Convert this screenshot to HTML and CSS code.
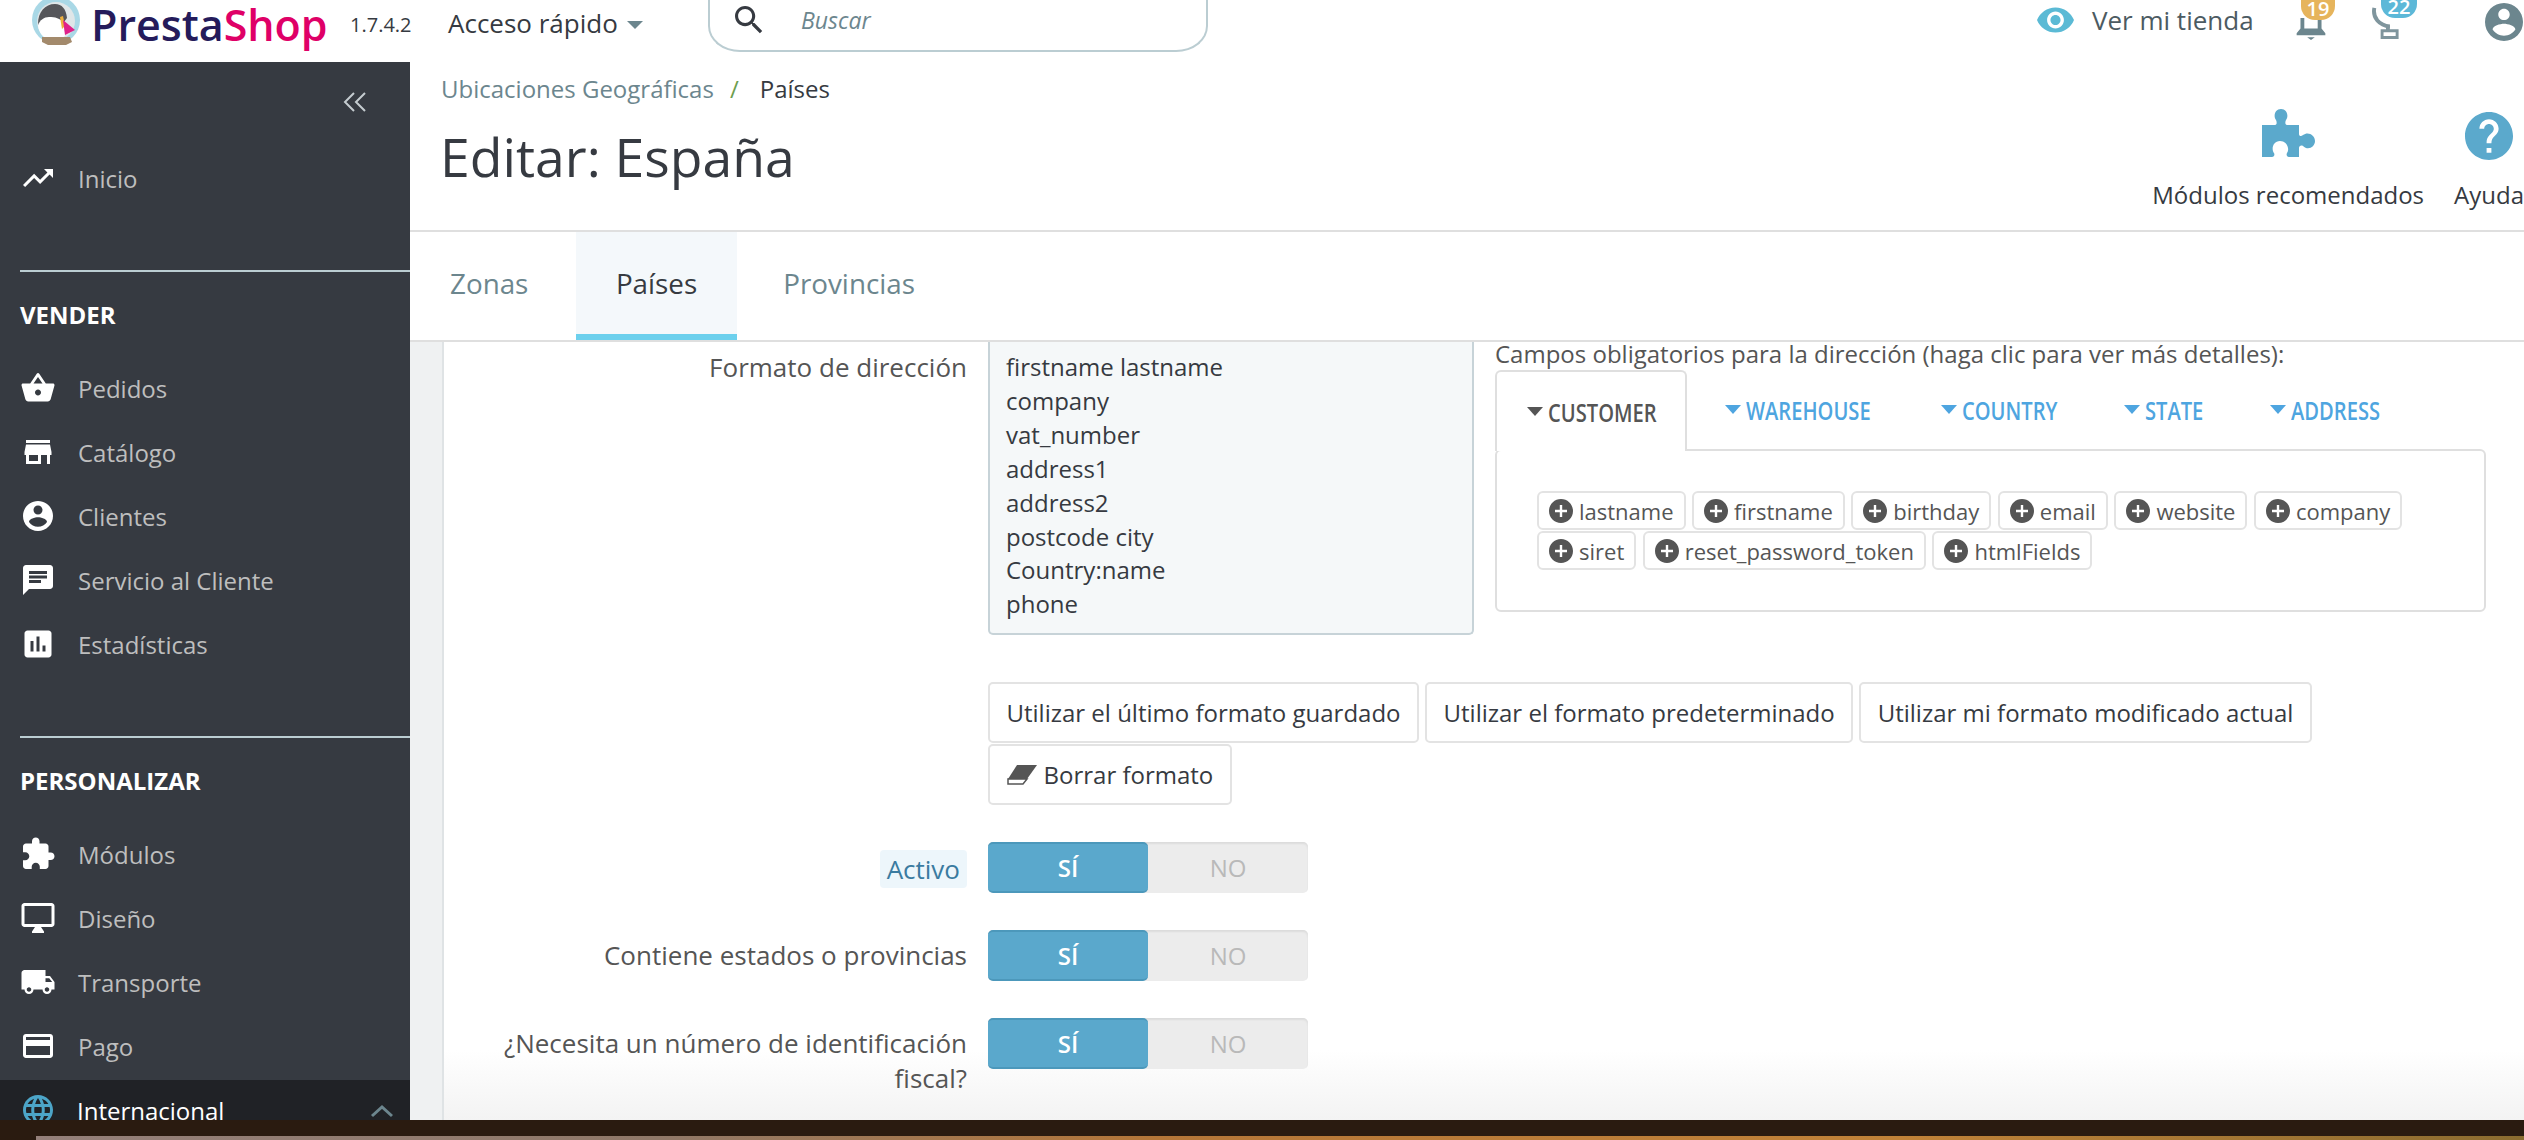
FILE: index.html
```html
<!DOCTYPE html>
<html lang="es">
<head>
<meta charset="utf-8">
<title>Editar: España</title>
<link rel="stylesheet" href="styles.css">
</head>
<body>
<svg class="defs" aria-hidden="true">
  <symbol id="i-add" viewBox="2 2 20 20"><path d="M12 2C6.48 2 2 6.48 2 12s4.48 10 10 10 10-4.48 10-10S17.52 2 12 2zm5 11h-4v4h-2v-4H7v-2h4V7h2v4h4v2z"/></symbol>
  <symbol id="i-account" viewBox="2 2 20 20"><path d="M12 2C6.48 2 2 6.48 2 12s4.48 10 10 10 10-4.48 10-10S17.52 2 12 2zm0 3c1.66 0 3 1.34 3 3s-1.34 3-3 3-3-1.34-3-3 1.34-3 3-3zm0 14.2c-2.5 0-4.71-1.28-6-3.22.03-1.99 4-3.08 6-3.08 1.99 0 5.97 1.09 6 3.08-1.29 1.94-3.5 3.22-6 3.22z"/></symbol>
</svg>
<div class="app">
  <header class="topbar">
    <div class="logo">
      <svg class="logo-mark" viewBox="0 0 48 46">
        <circle cx="24" cy="20" r="24" fill="#a9d8e6"/>
        <circle cx="24" cy="21" r="19" fill="#dfe6e8"/>
        <path d="M6 24C6 12 13 4 23 4c7 0 11 5 12 14l-3 4-18-4-8 8z" fill="#55565a"/>
        <path d="M6 25c2-5 6-8 11-8 6 0 11 1 15 6l1 13-3 2H13C9 35 6 30 6 25z" fill="#fff"/>
        <path d="M28 17l3-1 2 10-3 3z" fill="#eeb03c"/>
        <path d="M31 20L43 30 33 35z" fill="#e0218a"/>
        <path d="M10 37h28l2 5-6 3H16l-6-3z" fill="#a38a6c"/>
      </svg>
      <span class="logo-text"><span class="logo-presta">Presta</span><span class="logo-shop">Shop</span></span>
      <span class="version">1.7.4.2</span>
    </div>
    <div class="quick">Acceso rápido<span class="quick-caret"></span></div>
    <div class="search">
      <svg class="search-icon" viewBox="3 3 18 18"><path d="M15.5 14h-.79l-.28-.27C15.41 12.59 16 11.11 16 9.5 16 5.91 13.09 3 9.5 3S3 5.91 3 9.5 5.91 16 9.5 16c1.61 0 3.09-.59 4.23-1.57l.27.28v.79l5 4.99L20.49 19l-4.99-5zm-6 0C7.01 14 5 11.99 5 9.5S7.01 5 9.5 5 14 7.01 14 9.5 11.99 14 9.5 14z"/></svg>
      <span class="search-text">Buscar</span>
    </div>
    <div class="top-right">
      <svg class="eye" viewBox="1 4.5 22 15"><path d="M12 4.5C7 4.5 2.73 7.61 1 12c1.73 4.39 6 7.5 11 7.5s9.27-3.11 11-7.5c-1.73-4.39-6-7.5-11-7.5zM12 17c-2.76 0-5-2.24-5-5s2.24-5 5-5 5 2.24 5 5-2.24 5-5 5zm0-8c-1.66 0-3 1.34-3 3s1.34 3 3 3 3-1.34 3-3-1.34-3-3-3z"/></svg>
      <span class="view-shop">Ver mi tienda</span>
      <div class="notif notif-bell">
        <svg class="notif-icon" viewBox="0 0 30 23"><path d="M4 0h4v11h14V0h4v11l4 5v2H0v-2l4-5z"/><path d="M11 20h8l-4 3z"/></svg>
        <span class="badge badge-orange">19</span>
      </div>
      <div class="notif notif-dish">
        <svg class="notif-icon" viewBox="0 0 28 34"><path d="M3 1C1 11 8 19 19 20" fill="none" stroke="#7f959d" stroke-width="4"/><path d="M15 19h4v5h-4z" fill="#7f959d"/><path d="M11 24.5h15.500v7H11z" fill="none" stroke="#7f959d" stroke-width="3"/></svg>
        <span class="badge badge-blue">22</span>
      </div>
      <svg class="user-icon"><use href="#i-account"/></svg>
    </div>
  </header>

  <div class="body">
    <nav class="sidebar">
      <div class="collapse"><svg class="collapse-icon" viewBox="0 0 24 20"><path d="M11 1L2 10l9 9M22 1l-9 9 9 9" fill="none" stroke="#c5ccd0" stroke-width="2"/></svg></div>
      <a class="nav-item"><svg class="nav-icon" viewBox="0 0 24 24"><path d="M16 6l2.29 2.29-4.88 4.88-4-4L2 16.59 3.41 18l6-6 4 4 6.3-6.29L22 12V6z"/></svg><span>Inicio</span></a>
      <div class="nav-sep"></div>
      <h2 class="nav-head">VENDER</h2>
      <a class="nav-item"><svg class="nav-icon" viewBox="0 0 24 24"><path d="M17.21 9l-4.38-6.56c-.19-.28-.51-.42-.83-.42-.32 0-.64.14-.83.43L6.79 9H2c-.55 0-1 .45-1 1 0 .09.01.18.04.27l2.54 9.27c.23.84 1 1.46 1.92 1.46h13c.92 0 1.69-.62 1.93-1.46l2.54-9.27L23 10c0-.55-.45-1-1-1h-4.79zM9 9l3-4.4L15 9H9zm3 8c-1.1 0-2-.9-2-2s.9-2 2-2 2 .9 2 2-.9 2-2 2z"/></svg><span>Pedidos</span></a>
      <a class="nav-item"><svg class="nav-icon" viewBox="0 0 24 24"><path d="M20 4H4v2h16V4zm1 10v-2l-1-5H4l-1 5v2h1v6h10v-6h4v6h2v-6h1zm-9 4H6v-4h6v4z"/></svg><span>Catálogo</span></a>
      <a class="nav-item"><svg class="nav-icon" viewBox="0 0 24 24"><path d="M12 2C6.48 2 2 6.48 2 12s4.48 10 10 10 10-4.48 10-10S17.52 2 12 2zm0 3c1.66 0 3 1.34 3 3s-1.34 3-3 3-3-1.34-3-3 1.34-3 3-3zm0 14.2c-2.5 0-4.71-1.28-6-3.22.03-1.99 4-3.08 6-3.08 1.99 0 5.97 1.09 6 3.08-1.29 1.94-3.5 3.22-6 3.22z"/></svg><span>Clientes</span></a>
      <a class="nav-item"><svg class="nav-icon" viewBox="0 0 24 24"><path d="M20 2H4c-1.1 0-1.99.9-1.99 2L2 22l4-4h14c1.1 0 2-.9 2-2V4c0-1.1-.9-2-2-2zM6 9h12v2H6V9zm8 5H6v-2h8v2zm4-6H6V6h12v2z"/></svg><span>Servicio al Cliente</span></a>
      <a class="nav-item"><svg class="nav-icon" viewBox="0 0 24 24"><path d="M19 3H5c-1.1 0-2 .9-2 2v14c0 1.1.9 2 2 2h14c1.1 0 2-.9 2-2V5c0-1.1-.9-2-2-2zM9 17H7v-7h2v7zm4 0h-2V7h2v10zm4 0h-2v-4h2v4z"/></svg><span>Estadísticas</span></a>
      <div class="nav-sep"></div>
      <h2 class="nav-head">PERSONALIZAR</h2>
      <a class="nav-item"><svg class="nav-icon" viewBox="0 0 24 24"><path d="M20.5 11H19V7c0-1.1-.9-2-2-2h-4V3.5C13 2.12 11.88 1 10.5 1S8 2.12 8 3.5V5H4c-1.1 0-1.99.9-1.99 2v3.8H3.5c1.49 0 2.7 1.21 2.7 2.7s-1.21 2.7-2.7 2.7H2V20c0 1.1.9 2 2 2h3.8v-1.5c0-1.49 1.21-2.7 2.7-2.7 1.49 0 2.7 1.21 2.7 2.7V22H17c1.1 0 2-.9 2-2v-4h1.5c1.38 0 2.5-1.12 2.5-2.5S21.88 11 20.5 11z"/></svg><span>Módulos</span></a>
      <a class="nav-item"><svg class="nav-icon" viewBox="0 0 24 24"><path d="M21 2H3c-1.1 0-2 .9-2 2v12c0 1.1.9 2 2 2h7l-2 3v1h8v-1l-2-3h7c1.1 0 2-.9 2-2V4c0-1.1-.9-2-2-2zm0 14H3V4h18v12z"/></svg><span>Diseño</span></a>
      <a class="nav-item"><svg class="nav-icon" viewBox="0 0 24 24"><path d="M20 8h-3V4H3c-1.1 0-2 .9-2 2v11h2c0 1.66 1.34 3 3 3s3-1.34 3-3h6c0 1.66 1.34 3 3 3s3-1.34 3-3h2v-5l-3-4zM6 18.5c-.83 0-1.5-.67-1.5-1.5s.67-1.5 1.5-1.5 1.5.67 1.5 1.5-.67 1.5-1.5 1.5zm13.5-9l1.96 2.5H17V9.5h2.5zm-1.5 9c-.83 0-1.5-.67-1.5-1.5s.67-1.5 1.5-1.5 1.5.67 1.5 1.5-.67 1.5-1.5 1.5z"/></svg><span>Transporte</span></a>
      <a class="nav-item"><svg class="nav-icon" viewBox="0 0 24 24"><path d="M20 4H4c-1.11 0-1.99.89-1.99 2L2 18c0 1.11.89 2 2 2h16c1.11 0 2-.89 2-2V6c0-1.11-.89-2-2-2zm0 14H4v-6h16v6zm0-10H4V6h16v2z"/></svg><span>Pago</span></a>
      <a class="nav-item nav-active"><svg class="nav-icon" viewBox="0 0 24 24"><path d="M11.99 2C6.47 2 2 6.48 2 12s4.47 10 9.99 10C17.52 22 22 17.52 22 12S17.52 2 11.99 2zm6.93 6h-2.95c-.32-1.25-.78-2.45-1.38-3.56 1.84.63 3.37 1.91 4.33 3.56zM12 4.04c.83 1.2 1.48 2.53 1.91 3.96h-3.82c.43-1.43 1.08-2.76 1.91-3.96zM4.26 14C4.1 13.36 4 12.69 4 12s.1-1.36.26-2h3.38c-.08.66-.14 1.32-.14 2 0 .68.06 1.34.14 2H4.26zm.82 2h2.95c.32 1.25.78 2.45 1.38 3.56-1.84-.63-3.37-1.9-4.33-3.56zm2.95-8H5.08c.96-1.66 2.49-2.93 4.33-3.56C8.81 5.55 8.35 6.75 8.03 8zM12 19.96c-.83-1.2-1.48-2.53-1.91-3.96h3.82c-.43 1.43-1.08 2.76-1.91 3.96zM14.34 14H9.66c-.09-.66-.16-1.32-.16-2 0-.68.07-1.35.16-2h4.68c.09.65.16 1.32.16 2 0 .68-.07 1.34-.16 2zm.25 5.56c.6-1.11 1.06-2.31 1.38-3.56h2.95c-.96 1.65-2.49 2.93-4.33 3.56zM16.36 14c.08-.66.14-1.32.14-2 0-.68-.06-1.34-.14-2h3.38c.16.64.26 1.31.26 2s-.1 1.36-.26 2h-3.38z"/></svg><span>Internacional</span><svg class="nav-chevron" viewBox="0 0 24 14"><path d="M2 12L12 3l10 9" fill="none" stroke="#6c868e" stroke-width="3"/></svg></a>
    </nav>

    <div class="content">
      <div class="page-head">
        <div class="head-left">
          <div class="crumbs"><span class="crumb-link">Ubicaciones Geográficas</span><span class="crumb-sep">/</span><span class="crumb-current">Países</span></div>
          <h1 class="title">Editar: España</h1>
        </div>
        <div class="head-actions">
          <div class="action action-modules">
            <svg class="action-puzzle" viewBox="0 0 53 49"><path d="M0 17H13C15 17 15 14 14 12C11 8 13 1 19 1C25 1 27 8 24 12C23 14 23 17 25 17H37V26C37 28 39 29 41 27C46 23 53 27 53 33C53 39 46 43 41 38C39 37 37 38 37 40V49H27C25 49 24 47 25 45C28 41 25 33 18 33C11 33 9 41 12 45C13 47 12 49 10 49H0Z"/></svg>
            <span>Módulos recomendados</span>
          </div>
          <div class="action action-help">
            <svg class="action-help-icon" viewBox="2 2 20 20"><path d="M12 2C6.48 2 2 6.48 2 12s4.48 10 10 10 10-4.48 10-10S17.52 2 12 2zm1 17h-2v-2h2v2zm2.07-7.75l-.9.92C13.45 12.9 13 13.5 13 15h-2v-.5c0-1.1.45-2.1 1.17-2.83l1.24-1.26c.37-.36.59-.86.59-1.41 0-1.1-.9-2-2-2s-2 .9-2 2H8c0-2.21 1.79-4 4-4s4 1.79 4 4c0 .88-.36 1.68-.93 2.25z"/></svg>
            <span>Ayuda</span>
          </div>
        </div>
      </div>
      <div class="tabs">
        <a class="tab">Zonas</a>
        <a class="tab tab-active">Países</a>
        <a class="tab">Provincias</a>
      </div>
      <main class="main">
        <div class="panel">
          <div class="row row-format">
            <label class="row-label">Formato de dirección</label>
            <div class="format-controls">
              <div class="format-box">
                <div>firstname lastname</div>
                <div>company</div>
                <div>vat_number</div>
                <div>address1</div>
                <div>address2</div>
                <div>postcode city</div>
                <div>Country:name</div>
                <div>phone</div>
              </div>
              <div class="fields">
                <div class="fields-title">Campos obligatorios para la dirección (haga clic para ver más detalles):</div>
                <div class="field-tabs">
                  <a class="field-tab field-tab-active"><span class="field-caret"></span><span class="field-name">CUSTOMER</span></a>
                  <a class="field-tab"><span class="field-caret"></span><span class="field-name">WAREHOUSE</span></a>
                  <a class="field-tab"><span class="field-caret"></span><span class="field-name">COUNTRY</span></a>
                  <a class="field-tab"><span class="field-caret"></span><span class="field-name">STATE</span></a>
                  <a class="field-tab"><span class="field-caret"></span><span class="field-name">ADDRESS</span></a>
                </div>
                <div class="field-panel">
                  <a class="chip"><svg class="chip-icon"><use href="#i-add"/></svg>lastname</a>
                  <a class="chip"><svg class="chip-icon"><use href="#i-add"/></svg>firstname</a>
                  <a class="chip"><svg class="chip-icon"><use href="#i-add"/></svg>birthday</a>
                  <a class="chip"><svg class="chip-icon"><use href="#i-add"/></svg>email</a>
                  <a class="chip"><svg class="chip-icon"><use href="#i-add"/></svg>website</a>
                  <a class="chip"><svg class="chip-icon"><use href="#i-add"/></svg>company</a>
                  <a class="chip"><svg class="chip-icon"><use href="#i-add"/></svg>siret</a>
                  <a class="chip"><svg class="chip-icon"><use href="#i-add"/></svg>reset_password_token</a>
                  <a class="chip"><svg class="chip-icon"><use href="#i-add"/></svg>htmlFields</a>
                </div>
              </div>
            </div>
          </div>
          <div class="row row-buttons">
            <div class="row-label"></div>
            <div class="buttons">
              <button class="btn">Utilizar el último formato guardado</button>
              <button class="btn">Utilizar el formato predeterminado</button>
              <button class="btn">Utilizar mi formato modificado actual</button>
              <button class="btn"><svg class="eraser" viewBox="0 0 30 20"><path d="M10 0H30L20 14H1Z" fill="#555"/><path d="M1 14H20L16 19H1Z" fill="#fff" stroke="#555" stroke-width="1.5"/></svg>Borrar formato</button>
            </div>
          </div>
          <div class="row row-switch">
            <label class="row-label"><span class="label-hint">Activo</span></label>
            <div class="switch"><span class="switch-on">SÍ</span><span class="switch-off">NO</span></div>
          </div>
          <div class="row row-switch">
            <label class="row-label">Contiene estados o provincias</label>
            <div class="switch"><span class="switch-on">SÍ</span><span class="switch-off">NO</span></div>
          </div>
          <div class="row row-switch">
            <label class="row-label">¿Necesita un número de identificación fiscal?</label>
            <div class="switch"><span class="switch-on">SÍ</span><span class="switch-off">NO</span></div>
          </div>
        </div>
      </main>
    </div>
  </div>
  <div class="desktop-strip"><div class="desktop-window"></div></div>
</div>
</body>
</html>
```
FILE: styles.css
```css
* { box-sizing: border-box; }
html, body { margin: 0; padding: 0; height: 100%; overflow: hidden; }
body { font-family: "Open Sans", "Noto Sans", sans-serif; font-size: 24px; color: #363a41; background: #fff; }
.defs { display: none; }
.app { width: 2524px; height: 1140px; display: grid; grid-template-rows: 62px 1058px 20px; overflow: hidden; }

/* top bar */
.topbar { display: flex; align-items: flex-start; background: #fff; overflow: hidden; }
.logo { display: flex; align-items: flex-start; padding-left: 32px; width: 448px; flex: none; }
.logo-mark { width: 48px; height: 46px; flex: none; }
.logo-text { margin-left: 11px; font-size: 43px; line-height: 50px; font-weight: 600; width: 236px; flex: none; white-space: nowrap; }
.logo-presta { color: #251b5b; }
.logo-shop { color: #df0067; }
.version { margin-left: 23px; margin-top: 9px; font-size: 20px; line-height: 32px; color: #363a41; }
.quick { width: 260px; flex: none; font-size: 26px; line-height: 46px; color: #363a41; display: flex; align-items: center; }
.quick-caret { margin-left: 9px; margin-top: 3px; border-left: 8px solid transparent; border-right: 8px solid transparent; border-top: 8px solid #6c868e; }
.search { width: 500px; height: 62px; margin-top: -10px; flex: none; border: 2px solid #bbcdd2; border-top: 0; border-radius: 0 0 32px 32px / 0 0 26px 26px; display: flex; align-items: center; padding: 10px 0 10px 25px; }
.search-icon { width: 28px; height: 30px; fill: #363a41; flex: none; }
.search-text { margin-left: 38px; font-style: italic; font-size: 23px; color: #6c868e; }
.top-right { flex: 1; display: flex; align-items: flex-start; padding-left: 829px; }
.eye { width: 37px; height: 26px; margin-top: 7px; fill: #5bbad5; flex: none; }
.view-shop { margin-left: 18px; font-size: 26px; line-height: 40px; color: #4c5b62; width: 204px; flex: none; white-space: nowrap; }
.notif { position: relative; flex: none; }
.notif-bell { width: 30px; height: 40px; margin-top: 18px; }
.notif-dish { width: 28px; height: 34px; margin-top: 7px; margin-left: 45px; }
.notif-icon { width: 100%; height: 22px; fill: #6c868e; display: block; }
.notif-dish .notif-icon { height: 33px; }
.badge { position: absolute; color: #fff; font-size: 20px; font-weight: 600; line-height: 18px; text-align: center; border-radius: 0 0 14px 14px; height: 20px; }
.badge-orange { background: #e6b45c; width: 34px; left: 5px; top: -18px; }
.badge-blue { background: #5cb8d8; width: 36px; left: 10px; top: -7px; height: 18px; line-height: 14px; box-shadow: 0 0 0 3px #fff; }
.user-icon { width: 38px; height: 40px; margin-top: 2px; margin-left: 86px; fill: #6c868e; flex: none; }

/* body */
.body { display: grid; grid-template-columns: 410px 1fr; overflow: hidden; min-height: 0; }
.sidebar { background: #363a41; overflow: hidden; display: flex; flex-direction: column; }
.collapse { height: 84px; display: flex; justify-content: flex-end; padding: 30px 43px 0 0; flex: none; }
.collapse-icon { width: 24px; height: 20px; }
.nav-item { height: 64px; flex: none; display: flex; align-items: center; padding-left: 20px; color: #bebebe; font-size: 24px; position: relative; }
.nav-icon { width: 36px; height: 36px; fill: #fff; margin-right: 22px; flex: none; }
.nav-sep { flex: none; height: 2px; background: #bbcdd2; margin: 60px 0 0 20px; }
.nav-head { margin: 0; padding-left: 20px; flex: none; height: 84px; display: flex; align-items: center; font-size: 24px; font-weight: 700; color: #fff; }
.nav-active { background: #202226; color: #fff; margin-top: 2px; padding-bottom: 4px; }
.nav-active .nav-chevron { position: absolute; right: 16px; top: 24px; width: 24px; height: 14px; }
.nav-active .nav-icon { fill: #4ca5c8; margin-right: 21px; }

/* page head */
.content { display: flex; flex-direction: column; min-width: 0; overflow: hidden; background: #eff1f2; }
.page-head { height: 170px; flex: none; background: #fff; border-bottom: 2px solid #dfdfdf; display: flex; justify-content: space-between; padding-left: 31px; }
.crumbs { margin-top: 11px; font-size: 24px; line-height: 32px; display: flex; }
.crumb-link { color: #6c868e; }
.crumb-sep { color: #6e9e4f; margin: 0 21px 0 16px; }
.crumb-current { color: #363a41; }
.title { margin: 18px 0 0 -1px; font-size: 53.5px; line-height: 68px; font-weight: 400; color: #363a41; }
.head-actions { display: flex; gap: 30px; flex: none; }
.action { display: flex; flex-direction: column; align-items: center; font-size: 24px; line-height: 32px; color: #363a41; padding-top: 46px; }
.action span { margin-top: auto; padding-bottom: 19px; white-space: nowrap; }
.action-puzzle { width: 53px; height: 49px; fill: #5ba9cc; }
.action-help-icon { width: 48px; height: 48px; fill: #5ba9cc; margin-top: 4px; }

/* tabs */
.tabs { height: 110px; flex: none; background: #fff; border-bottom: 2px solid #dfdfdf; display: flex; }
.tab { height: 108px; padding: 0 40px 6px; display: flex; align-items: center; font-size: 27.8px; color: #6c868e; }
.tab:first-child { padding-right: 47.500px; }
.tab:last-child { padding-left: 46px; }
.tab-active { background: #f4f8fb; color: #363a41; border-bottom: 6px solid #6cd0ed; padding-bottom: 0; }

/* form */
.main { flex: 1; min-height: 0; overflow: hidden; padding-left: 32px; }
.panel { height: 100%; background: linear-gradient(to top, #f3f3f3, #fff 70px); border-left: 2px solid #dfe3e5; overflow: hidden; }
.row { display: grid; grid-template-columns: 523px 1fr; column-gap: 21px; }
.row-label { text-align: right; color: #555; font-size: 26px; line-height: 35px; }
.row-format .row-label { padding-top: 8px; }
.format-controls { display: flex; gap: 21px; align-items: flex-start; }
.format-box { width: 486px; height: 293px; background: #f5f8f9; border: 2px solid #c7d3d8; border-top: 0; border-radius: 0 0 5px 5px; padding: 8px 16px; font-size: 24px; line-height: 33.9px; color: #363a41; flex: none; white-space: nowrap; }
.fields { width: 991px; flex: none; }
.fields-title { font-size: 24px; line-height: 24px; color: #555; height: 28px; white-space: nowrap; }
.field-tabs { display: grid; grid-template-columns: 198px 216px 183px 146px 1fr; height: 79px; position: relative; z-index: 1; }
.field-tab { display: flex; align-items: center; padding-left: 32px; height: 79px; font-weight: 600; font-size: 25px; color: #4ea5e0; white-space: nowrap; }
.field-name { display: inline-block; transform: scaleX(.805); transform-origin: left center; }
.field-caret { border-left: 8px solid transparent; border-right: 8px solid transparent; border-top: 9px solid currentColor; margin-right: 5px; flex: none; }
.field-tab-active { color: #555; background: #fff; border: 2px solid #dfdfdf; border-bottom: 0; border-radius: 6px 6px 0 0; height: 81px; width: 192px; padding-left: 30px; }
.field-panel { height: 163px; border: 2px solid #dfdfdf; border-radius: 6px; padding: 40px 40px 0; display: flex; flex-wrap: wrap; gap: 1px 6.5px; align-content: flex-start; background: #fff; }
.chip { height: 39px; display: inline-flex; align-items: center; padding: 0 10px; border: 2px solid #e3e3e3; border-radius: 6px; font-size: 22px; color: #555; white-space: nowrap; }
.chip-icon { width: 24px; height: 24px; fill: #555; margin-right: 6px; flex: none; }

.row-buttons { margin-top: 47px; }
.buttons { display: flex; flex-wrap: wrap; width: 1340px; gap: 1px 6px; }
.btn { height: 61px; background: #fff; border: 2px solid #e3e3e3; border-radius: 5px; font-family: inherit; font-size: 24px; color: #363a41; padding: 0 16.500px; display: inline-flex; align-items: center; white-space: nowrap; }
.eraser { width: 30px; height: 20px; margin-right: 7px; flex: none; }

.row-switch { margin-top: 37px; }
.row-switch .row-label { min-height: 51px; padding-top: 8px; }
.label-hint { display: inline-block; background: #edf6fb; color: #3a7ba0; padding: 0 7px; border-radius: 4px; line-height: 38px; }
.switch { width: 320px; height: 51px; display: flex; background: #ececec; border-radius: 5px; box-shadow: inset 0 2px 2px #dcdcdc; font-size: 24px; }
.switch-on { width: 160px; background: #5aa8cc; color: #fff; font-weight: 600; border-radius: 5px; border-bottom: 2px solid #4c98bb; border-top: 2px solid #4c98bb; display: flex; align-items: center; justify-content: center; }
.switch-off { flex: 1; color: #b9b9b9; display: flex; align-items: center; justify-content: center; }

/* desktop strip under the window */
.desktop-strip { background: #2a1b10; padding: 16px 0 0 36px; overflow: hidden; }
.desktop-window { height: 4px; background: linear-gradient(to right, #94807a, #8f7868 25%, #b47638 45%, #c08238 75%, #8a6c30); }
```
